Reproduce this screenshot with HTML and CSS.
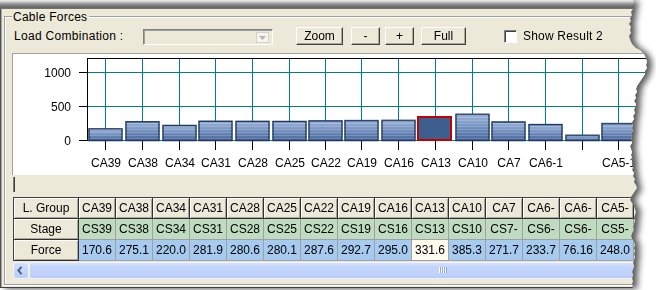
FILE: index.html
```html
<!DOCTYPE html>
<html>
<head>
<meta charset="utf-8">
<title>Cable Forces</title>
<link rel="stylesheet" href="styles.css">
</head>
<body>
<div class="shadow-wrap">
  <div class="sheet">
    <div class="topband"></div>
    <div class="window">
      <div class="group">
        <div class="group-title">Cable Forces</div>
        <div class="toolbar">
          <span class="lbl">Load Combination :</span>
          <div class="combo">
            <div class="combo-btn"><svg width="7" height="4" viewBox="0 0 7 4"><polygon points="0,0 7,0 3.5,4" fill="#b4b4b4"/></svg></div>
          </div>
          <button class="btn btn-zoom">Zoom</button>
          <button class="btn btn-minus">-</button>
          <button class="btn btn-plus">+</button>
          <button class="btn btn-full">Full</button>
          <span class="chk"><span class="box"></span>Show Result 2</span>
        </div>
        <div class="chart">
          <svg class="plot" width="640" height="121" viewBox="0 0 640 121">
            <defs>
              <linearGradient id="barg" x1="0" y1="0" x2="0" y2="1">
                <stop offset="0" stop-color="#9DB4DA"/>
                <stop offset="0.5" stop-color="#7390BF"/>
                <stop offset="1" stop-color="#46659A"/>
              </linearGradient>
              <pattern id="stripes" width="4" height="3" patternUnits="userSpaceOnUse">
                <rect width="4" height="1" fill="#ffffff" fill-opacity="0.16"/>
              </pattern>
            </defs>
            <g transform="translate(-13 -54)">
              <g stroke="#008080" stroke-width="1" shape-rendering="crispEdges">
                <line x1="88" y1="72.5" x2="660" y2="72.5"/>
                <line x1="88" y1="106.5" x2="660" y2="106.5"/>
                <line x1="88" y1="140.5" x2="660" y2="140.5"/>
                <line x1="105.5" y1="59" x2="105.5" y2="140"/>
                <line x1="142.5" y1="59" x2="142.5" y2="140"/>
                <line x1="179.5" y1="59" x2="179.5" y2="140"/>
                <line x1="215.5" y1="59" x2="215.5" y2="140"/>
                <line x1="252.5" y1="59" x2="252.5" y2="140"/>
                <line x1="289.5" y1="59" x2="289.5" y2="140"/>
                <line x1="325.5" y1="59" x2="325.5" y2="140"/>
                <line x1="361.5" y1="59" x2="361.5" y2="140"/>
                <line x1="398.5" y1="59" x2="398.5" y2="140"/>
                <line x1="435.5" y1="59" x2="435.5" y2="140"/>
                <line x1="472.5" y1="59" x2="472.5" y2="140"/>
                <line x1="508.5" y1="59" x2="508.5" y2="140"/>
                <line x1="545.5" y1="59" x2="545.5" y2="140"/>
                <line x1="582.5" y1="59" x2="582.5" y2="140"/>
                <line x1="618.5" y1="59" x2="618.5" y2="140"/>
              </g>
              <g stroke="#000" stroke-width="1" shape-rendering="crispEdges">
                <line x1="87" y1="58.5" x2="660" y2="58.5"/>
                <line x1="87.5" y1="58" x2="87.5" y2="141"/>
                <line x1="79" y1="72.5" x2="87" y2="72.5"/>
                <line x1="79" y1="106.5" x2="87" y2="106.5"/>
                <line x1="79" y1="140.5" x2="87" y2="140.5"/>
                <line x1="105.5" y1="141" x2="105.5" y2="150"/>
                <line x1="142.5" y1="141" x2="142.5" y2="150"/>
                <line x1="179.5" y1="141" x2="179.5" y2="150"/>
                <line x1="215.5" y1="141" x2="215.5" y2="150"/>
                <line x1="252.5" y1="141" x2="252.5" y2="150"/>
                <line x1="289.5" y1="141" x2="289.5" y2="150"/>
                <line x1="325.5" y1="141" x2="325.5" y2="150"/>
                <line x1="361.5" y1="141" x2="361.5" y2="150"/>
                <line x1="398.5" y1="141" x2="398.5" y2="150"/>
                <line x1="435.5" y1="141" x2="435.5" y2="150"/>
                <line x1="472.5" y1="141" x2="472.5" y2="150"/>
                <line x1="508.5" y1="141" x2="508.5" y2="150"/>
                <line x1="545.5" y1="141" x2="545.5" y2="150"/>
                <line x1="582.5" y1="141" x2="582.5" y2="150"/>
                <line x1="618.5" y1="141" x2="618.5" y2="150"/>
              </g>
              <g class="bars" stroke="#1E3A62" stroke-width="1.5">
                <rect x="89" y="128.9" width="33" height="11.6"/>
                <rect x="126" y="121.8" width="33" height="18.7"/>
                <rect x="163" y="125.5" width="33" height="15"/>
                <rect x="199" y="121.3" width="33" height="19.2"/>
                <rect x="236" y="121.4" width="33" height="19.1"/>
                <rect x="273" y="121.5" width="33" height="19"/>
                <rect x="309" y="120.9" width="33" height="19.6"/>
                <rect x="345" y="120.6" width="33" height="19.9"/>
                <rect x="382" y="120.4" width="33" height="20.1"/>
                <rect x="456" y="114.3" width="33" height="26.2"/>
                <rect x="492" y="122" width="33" height="18.5"/>
                <rect x="529" y="124.6" width="33" height="15.9"/>
                <rect x="566" y="135.3" width="33" height="5.2"/>
                <rect x="602" y="123.6" width="33" height="16.9"/>
              </g>
              <g fill="url(#stripes)">
                <rect x="89" y="128.9" width="33" height="11.6"/>
                <rect x="126" y="121.8" width="33" height="18.7"/>
                <rect x="163" y="125.5" width="33" height="15"/>
                <rect x="199" y="121.3" width="33" height="19.2"/>
                <rect x="236" y="121.4" width="33" height="19.1"/>
                <rect x="273" y="121.5" width="33" height="19"/>
                <rect x="309" y="120.9" width="33" height="19.6"/>
                <rect x="345" y="120.6" width="33" height="19.9"/>
                <rect x="382" y="120.4" width="33" height="20.1"/>
                <rect x="456" y="114.3" width="33" height="26.2"/>
                <rect x="492" y="122" width="33" height="18.5"/>
                <rect x="529" y="124.6" width="33" height="15.9"/>
                <rect x="566" y="135.3" width="33" height="5.2"/>
                <rect x="602" y="123.6" width="33" height="16.9"/>
              </g>
              <rect x="418" y="117" width="33" height="23" fill="#3C5F90" stroke="#C40000" stroke-width="2"/>
              <g class="axis-text" text-anchor="end">
                <text x="71" y="77">1000</text>
                <text x="71" y="111">500</text>
                <text x="71" y="145">0</text>
              </g>
              <g class="axis-text" text-anchor="middle">
                <text x="106" y="167">CA39</text>
                <text x="143" y="167">CA38</text>
                <text x="180" y="167">CA34</text>
                <text x="216" y="167">CA31</text>
                <text x="253" y="167">CA28</text>
                <text x="290" y="167">CA25</text>
                <text x="326" y="167">CA22</text>
                <text x="362" y="167">CA19</text>
                <text x="399" y="167">CA16</text>
                <text x="436" y="167">CA13</text>
                <text x="473" y="167">CA10</text>
                <text x="509" y="167">CA7</text>
                <text x="546" y="167">CA6-1</text>
                <text x="619" y="167">CA5-1</text>
              </g>
            </g>
          </svg>
        </div>
        <div class="splitter"><span class="grip"></span></div>
        <div class="grid">
          <div class="c hd">L. Group</div>
          <div class="c hd">CA39</div>
          <div class="c hd">CA38</div>
          <div class="c hd">CA34</div>
          <div class="c hd">CA31</div>
          <div class="c hd">CA28</div>
          <div class="c hd">CA25</div>
          <div class="c hd">CA22</div>
          <div class="c hd">CA19</div>
          <div class="c hd">CA16</div>
          <div class="c hd">CA13</div>
          <div class="c hd">CA10</div>
          <div class="c hd">CA7</div>
          <div class="c hd">CA6-</div>
          <div class="c hd">CA6-</div>
          <div class="c hd">CA5-</div>

          <div class="c hd">Stage</div>
          <div class="c st">CS39</div>
          <div class="c st">CS38</div>
          <div class="c st">CS34</div>
          <div class="c st">CS31</div>
          <div class="c st">CS28</div>
          <div class="c st">CS25</div>
          <div class="c st">CS22</div>
          <div class="c st">CS19</div>
          <div class="c st">CS16</div>
          <div class="c st">CS13</div>
          <div class="c st">CS10</div>
          <div class="c st">CS7-</div>
          <div class="c st">CS6-</div>
          <div class="c st">CS6-</div>
          <div class="c st">CS5-</div>

          <div class="c hd">Force</div>
          <div class="c fo">170.6</div>
          <div class="c fo">275.1</div>
          <div class="c fo">220.0</div>
          <div class="c fo">281.9</div>
          <div class="c fo">280.6</div>
          <div class="c fo">280.1</div>
          <div class="c fo">287.6</div>
          <div class="c fo">292.7</div>
          <div class="c fo">295.0</div>
          <div class="c fo sel">331.6</div>
          <div class="c fo">385.3</div>
          <div class="c fo">271.7</div>
          <div class="c fo">233.7</div>
          <div class="c fo">76.16</div>
          <div class="c fo">248.0</div>
        </div>
        <div class="hscroll">
          <div class="sb-arrow"><svg width="6" height="9" viewBox="0 0 6 9"><polyline points="4.5,0.8 1.3,4.5 4.5,8.2" fill="none" stroke="#4D6185" stroke-width="2"/></svg></div>
          <div class="sb-thumb"><span class="sb-grip"></span></div>
        </div>
      </div>
    </div>
  </div>
</div>
</body>
</html>
```

FILE: styles.css
```css
* { box-sizing: border-box; }

html, body {
  margin: 0;
  padding: 0;
}

body {
  width: 656px;
  height: 290px;
  overflow: hidden;
  background: #ffffff;
  font-family: "Liberation Sans", Arial, sans-serif;
  font-size: 12px;
  color: #000;
}

.shadow-wrap {
  width: 656px;
  height: 288px;
  filter: drop-shadow(5px 1px 3px rgba(0, 0, 0, 0.65));
}

.sheet {
  width: 656px;
  height: 288px;
  display: flex;
  flex-direction: column;
  clip-path: polygon(0px 0px, 633px 0px, 634px 3px, 632px 6px, 633px 9px, 631px 12px, 632px 15px, 630px 18px, 631px 21px, 629px 24px, 631px 27px, 630px 30px, 631px 33px, 629px 36px, 630px 39px, 631px 42px, 633px 45px, 636px 48px, 640px 50px, 643px 53px, 645px 56px, 646px 59px, 647px 62px, 646px 65px, 647px 68px, 645px 71px, 645px 74px, 643px 77px, 641px 80px, 639px 83px, 637px 86px, 636px 89px, 637px 92px, 635px 95px, 636px 98px, 634px 101px, 636px 104px, 635px 107px, 634px 110px, 635px 113px, 633px 116px, 634px 119px, 632px 122px, 633px 125px, 632px 128px, 633px 131px, 631px 134px, 632px 137px, 631px 140px, 632px 143px, 630px 146px, 631px 149px, 632px 152px, 631px 155px, 632px 158px, 633px 161px, 632px 164px, 633px 167px, 632px 170px, 634px 173px, 633px 176px, 635px 179px, 634px 182px, 636px 185px, 637px 188px, 635px 191px, 633px 194px, 631px 197px, 630px 200px, 632px 203px, 634px 206px, 635px 209px, 636px 212px, 635px 215px, 634px 218px, 635px 221px, 634px 224px, 633px 227px, 634px 230px, 632px 233px, 631px 236px, 632px 239px, 634px 242px, 635px 245px, 634px 248px, 635px 251px, 634px 254px, 635px 257px, 634px 260px, 633px 263px, 634px 266px, 633px 269px, 632px 272px, 633px 275px, 632px 278px, 633px 281px, 632px 284px, 633px 288px, 0px 288px);
}

.topband {
  flex: none;
  height: 9px;
  background: linear-gradient(to bottom, #f2f2f2 0px, #c6c6c6 2px, #949494 4px, #747474 6px, #666666 8px, #7c7c7c 9px);
}

.window {
  flex: 1;
  display: flex;
  flex-direction: column;
  background: #ECE9D8;
  border-left: 1px solid #505050;
  border-bottom: 1px solid #404040;
  box-shadow: inset 1px 0 0 #a8a8a8;
  padding: 0 0 2px 3px;
}

.group {
  flex: none;
  margin-top: 7px;
  height: 269px;
  border: 1px solid #a0a0a0;
  border-right: none;
  box-shadow: inset 1px 1px 0 #ffffff, 0 1px 0 #ffffff;
  padding: 0 0 0 7px;
  display: flex;
  flex-direction: column;
}

.group-title {
  align-self: flex-start;
  margin-top: -7px;
  padding: 0 2px 0 1px;
  line-height: 14px;
  height: 14px;
  background: #ECE9D8;
  white-space: nowrap;
  letter-spacing: 0.25px;
}

.toolbar {
  display: flex;
  align-items: flex-start;
  height: 18px;
  margin-top: 3px;
}

.lbl {
  flex: 0 0 129px;
  margin-left: 2px;
  line-height: 18px;
  white-space: nowrap;
  letter-spacing: 0.3px;
}

.combo {
  flex: 0 0 130px;
  height: 16px;
  margin-top: 2px;
  border: 1px solid;
  border-color: #808080 #ffffff #ffffff #808080;
  box-shadow: inset 1px 1px 0 #a0a0a0;
  display: flex;
  justify-content: flex-end;
  padding: 2px 3px 0 0;
}

.combo-btn {
  width: 13px;
  height: 11px;
  border: 1px solid #d6d3c6;
  background: #f5f4ee;
  display: flex;
  align-items: center;
  justify-content: center;
}

.combo-btn svg { display: block; }

.btn {
  flex: none;
  height: 18px;
  padding: 0;
  margin: 0;
  font-family: "Liberation Sans", Arial, sans-serif;
  font-size: 12px;
  line-height: 16px;
  color: #000;
  background: #ECE9D8;
  border: 1px solid;
  border-color: #ffffff #404040 #404040 #ffffff;
  box-shadow: inset -1px -1px 0 #aca899;
}

.btn-zoom { width: 47px; margin-left: 23px; }
.btn-minus { width: 29px; margin-left: 8px; }
.btn-plus { width: 29px; margin-left: 5px; }
.btn-full { width: 45px; margin-left: 7px; }

.chk {
  display: flex;
  align-items: flex-start;
  margin-left: 38px;
  line-height: 18px;
  white-space: nowrap;
  letter-spacing: 0.2px;
}

.chk .box {
  width: 13px;
  height: 13px;
  margin: 3px 6px 0 0;
  background: #ffffff;
  border: 1px solid;
  border-color: #808080 #ffffff #ffffff #808080;
  box-shadow: inset 1px 1px 0 #404040;
}

.chart {
  flex: none;
  margin-top: 8px;
  height: 122px;
  background: #ffffff;
  border-top: 1px solid #a0a0a0;
  border-left: 1px solid #a0a0a0;
  overflow: hidden;
}

.plot { display: block; }

.axis-text {
  font-family: "Liberation Sans", Arial, sans-serif;
  font-size: 12px;
  fill: #000;
}

.bars rect { fill: url(#barg); }

.splitter {
  flex: none;
  height: 22px;
  padding: 2px 0 0 1px;
}

.grip {
  display: block;
  width: 2px;
  height: 15px;
  background: linear-gradient(to right, #7a7a7a 50%, #404040 50%);
}

.grid {
  flex: none;
  margin-left: 1px;
  display: grid;
  grid-template-columns: 65px repeat(15, 37px);
  grid-template-rows: repeat(3, 21px);
  border-top: 1px solid #404040;
  border-left: 1px solid #404040;
  width: max-content;
}

.c {
  border-right: 1px solid #a0a0a0;
  border-bottom: 1px solid #a0a0a0;
  line-height: 20px;
  text-align: center;
  white-space: nowrap;
  overflow: hidden;
}

.hd {
  background: #ECE9D8;
  border-color: #303030;
  box-shadow: inset 1px 1px 0 #ffffff, inset -1px -1px 0 #aca899;
}

.st { background: #C0DCC0; }
.fo { background: #A6CAF0; }
.fo.sel { background: #FFFBF0; }

.hscroll {
  flex: none;
  display: flex;
  height: 17px;
  margin: 1px 0 0 1px;
}

.sb-arrow {
  flex: 0 0 16px;
  height: 17px;
  border: 1px solid #f2f5fd;
  border-radius: 3px;
  background: linear-gradient(to bottom, #d3e0fd, #b9cdf7);
  display: flex;
  align-items: center;
  justify-content: center;
}

.sb-arrow svg { display: block; margin-left: -2px; }

.sb-thumb {
  flex: 1;
  height: 17px;
  border: 1px solid #eef2fd;
  border-radius: 3px;
  background: linear-gradient(to bottom, #d6e2fd 0px, #c4d5fc 4px, #bfd1fb 12px, #b5c9f6 16px);
  display: flex;
  align-items: flex-start;
}

.sb-grip {
  display: block;
  width: 8px;
  height: 6px;
  margin: 4px 0 0 409px;
  background: repeating-linear-gradient(to right, #ffffff 0px, #ffffff 1px, #8ca8e6 1px, #8ca8e6 2px);
}
```
